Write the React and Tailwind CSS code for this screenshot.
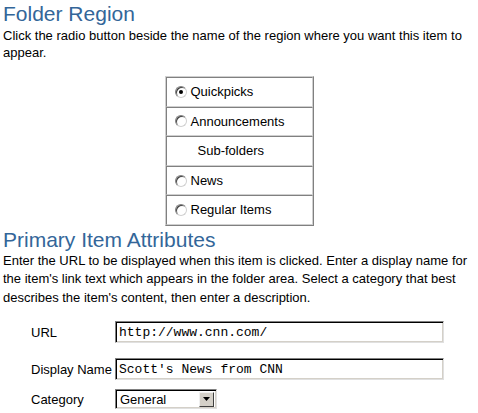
export default function App() {
  const Radio = ({ checked }) => (
    <span className="relative inline-block w-[12px] h-[12px] rounded-full bg-white border border-t-[#808080] border-l-[#808080] border-r-[#d0d0d0] border-b-[#d0d0d0] shadow-[inset_1px_1px_0_#404040] shrink-0">
      {checked && (
        <span className="absolute left-[3px] top-[3px] w-[4px] h-[4px] rounded-full bg-black" />
      )}
    </span>
  );
  const rows = [
    { label: "Quickpicks", radio: true, checked: true },
    { label: "Announcements", radio: true },
    { label: "Sub-folders", radio: false },
    { label: "News", radio: true },
    { label: "Regular Items", radio: true },
  ];
  const inputCls =
    "w-[329px] h-[22px] bg-white border border-t-[#808080] border-l-[#808080] border-r-[#e0e0e0] border-b-[#e0e0e0] shadow-[inset_1px_1px_0_#000,inset_-1px_-1px_0_#d4d0c8] flex items-center pl-[3px] font-['Liberation_Mono',monospace] text-[13px]";
  return (
    <div className="w-[478px] h-[413px] bg-white overflow-hidden text-black text-[13px] font-['Liberation_Sans',Arial,sans-serif]">
      <div className="px-[3px]">
        <h1 className="text-[21px] leading-[24px] text-[#336699] pt-[2px]">Folder Region</h1>
        <p className="leading-[17px] mt-[1px]">
          Click the radio button beside the name of the region where you want this item to appear.
        </p>
      </div>
      <div className="flex justify-center mt-[15px]">
        <div className="w-[149px] border border-t-[#d0d0d0] border-l-[#d0d0d0] border-r-[#808080] border-b-[#808080]">
          {rows.map((r) => (
            <div
              key={r.label}
              className="h-[29.6px] border border-t-[#808080] border-l-[#808080] border-r-[#d0d0d0] border-b-[#d0d0d0] flex items-center pl-[8px] gap-[4px]"
            >
              {r.radio ? <Radio checked={r.checked} /> : null}
              <span className={r.radio ? "" : "pl-[23px]"}>{r.label}</span>
            </div>
          ))}
        </div>
      </div>
      <div className="px-[3px] mt-[2px]">
        <h2 className="text-[21px] leading-[24px] text-[#336699]">Primary Item Attributes</h2>
        <p className="leading-[18.5px]">
          Enter the URL to be displayed when this item is clicked. Enter a display name for the item's link text which appears in the folder area. Select a category that best describes the item's content, then enter a description.
        </p>
      </div>
      <div className="pl-[31px] mt-[14px] flex flex-col">
        <div className="flex items-center">
          <span className="w-[84px]">URL</span>
          <div className={inputCls}>http://www.cnn.com/</div>
        </div>
        <div className="flex items-center mt-[15px]">
          <span className="w-[84px]">Display Name</span>
          <div className={inputCls}>Scott's News from CNN</div>
        </div>
        <div className="flex items-center mt-[9px]">
          <span className="w-[84px]">Category</span>
          <div className="w-[102px] h-[20px] bg-white border border-t-[#808080] border-l-[#808080] border-r-[#e0e0e0] border-b-[#e0e0e0] shadow-[inset_1px_1px_0_#000,inset_-1px_-1px_0_#d4d0c8] flex items-center pl-[4px] pr-[2px] text-[13px]">
            <span className="flex-1">General</span>
            <span className="w-[15px] h-[15px] bg-[#d4d0c8] border border-t-[#f0f0f0] border-l-[#f0f0f0] border-r-[#404040] border-b-[#404040] flex items-center justify-center">
              <svg width="7" height="4" viewBox="0 0 7 4">
                <path d="M0 0H7L3.5 4Z" fill="#000" />
              </svg>
            </span>
          </div>
        </div>
      </div>
    </div>
  );
}
